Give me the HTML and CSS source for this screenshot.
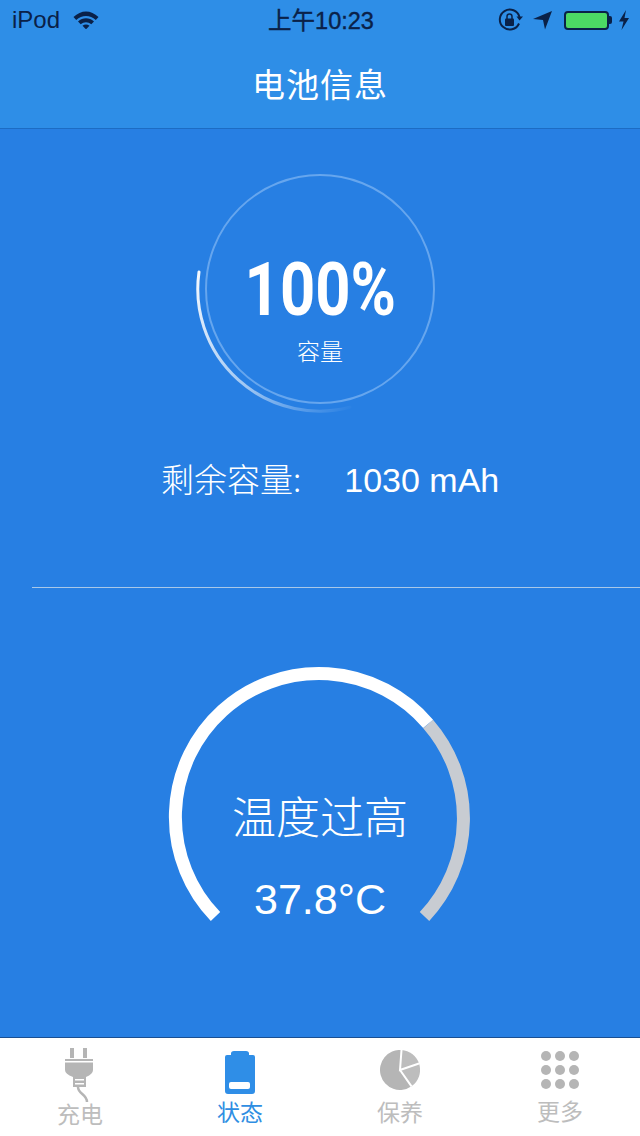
FILE: index.html
```html
<!DOCTYPE html>
<html lang="zh-CN">
  <head>
    <meta charset="UTF-8" />
    <meta name="viewport" content="width=device-width, initial-scale=1.0" />
    <title>电池信息</title>
    <link rel="stylesheet" href="styles.css">
  </head>
  <body>
    <div class="phone">
      <header class="topbar">
        <div class="status">
          <div class="status-left">
            <span>iPod</span>
            <svg class="wifi" width="26" height="18" viewBox="0 0 26 18">
              <path d="M0.500 6C8 -1.500 18 -1.500 25.500 6L22.800 9C17 3.500 9 3.500 3.200 9z" />
              <path d="M5 10.500C9.800 6.300 16.200 6.300 21 10.500L18.300 13.300C15.200 10.500 10.800 10.500 7.700 13.300z" />
              <path d="M9.500 14.800C11.600 13 14.400 13 16.500 14.800L13 18.300z" />
            </svg>
          </div>
          <div class="status-time">上午10:23</div>
          <div class="status-right">
            <svg width="26" height="24" viewBox="0 0 26 24">
              <path class="line" d="M21 15.500A10 10 0 1 1 21.500 9" />
              <path d="M18.500 8.500L25 8.500L21.500 12.500z" />
              <rect x="7" y="10.500" width="9" height="7.500" rx="1" />
              <path class="line-thin" d="M9 11V8.500a2.500 2.500 0 0 1 5 0V11" />
            </svg>
            <svg class="arrow" width="20" height="20" viewBox="0 0 20 20">
              <path d="M0 9L19 1L12 19.500L10 10z" />
            </svg>
            <div class="bat">
              <div class="bat-body"></div>
              <div class="bat-nub"></div>
            </div>
            <svg width="12" height="20" viewBox="0 0 12 20">
              <path d="M8 0L1 11.500H5.500L3.500 20L11 8H6.500z" />
            </svg>
          </div>
        </div>
        <h1 class="title">电池信息</h1>
      </header>

      <main class="main">
        <section class="capacity">
          <div class="stack ring">
            <svg width="250" height="250" viewBox="0 0 250 250">
              <defs>
                <linearGradient id="fade" gradientUnits="userSpaceOnUse" x1="4" y1="108" x2="158" y2="246">
                  <stop offset="0" stop-color="#fff" stop-opacity="0.95" />
                  <stop offset="0.55" stop-color="#fff" stop-opacity="0.55" />
                  <stop offset="1" stop-color="#fff" stop-opacity="0" />
                </linearGradient>
              </defs>
              <circle cx="125" cy="125" r="114" fill="none" stroke="#66a6ee" stroke-width="2" />
              <path d="M4 108A122 122 0 0 0 155 243.300" fill="none" stroke="url(#fade)" stroke-width="3" stroke-linecap="round" />
            </svg>
            <div class="ring-text">
              <div class="percent">100%</div>
              <div class="ring-label">容量</div>
            </div>
          </div>
          <div class="remain"><span class="remain-label">剩余容量:</span><span>1030 mAh</span></div>
        </section>

        <div class="divider"></div>

        <section class="temp">
          <div class="stack dial">
            <svg width="320" height="280" viewBox="0 0 320 280">
              <path d="M268.100 65.900A143.500 143.500 0 0 1 264.500 258.500" fill="none" stroke="#c8ccd2" stroke-width="13" />
              <path d="M55.500 258.500A143.500 143.500 0 1 1 268.100 65.900" fill="none" stroke="#fff" stroke-width="13" />
            </svg>
            <div class="dial-text">
              <div class="temp-state">温度过高</div>
              <div class="temp-value">37.8°C</div>
            </div>
          </div>
        </section>
      </main>

      <nav class="tabbar">
        <div class="tab tab-plug">
          <svg width="32" height="56" viewBox="0 0 32 56">
            <rect x="6" y="0" width="4" height="10" />
            <rect x="19" y="0" width="4" height="10" />
            <path d="M1 11H29V22Q29 26 22 29V39H9V29Q1 26 1 22z" />
            <rect x="1" y="13" width="28" height="1.500" fill="#fff" />
            <rect x="11" y="31" width="9" height="1.500" fill="#fff" />
            <rect x="11" y="35" width="9" height="1.500" fill="#fff" />
            <path d="M14 39C14 46 23 46 23 54" fill="none" stroke="#b5b5b5" stroke-width="2.500" />
          </svg>
          <span>充电</span>
        </div>
        <div class="tab tab-active">
          <svg width="30" height="43" viewBox="0 0 30 43">
            <path d="M6 4V2.500Q6 0 9 0H21Q24 0 24 2.500V4H28Q30 4 30 6V40Q30 43 27 43H3Q0 43 0 40V6Q0 4 2 4z" />
            <rect x="4" y="31" width="21" height="7" rx="2" fill="#fff" />
          </svg>
          <span>状态</span>
        </div>
        <div class="tab tab-pie">
          <svg width="40" height="40" viewBox="0 0 40 40">
            <path d="M20 20L31.500 36.300A20 20 0 1 1 21.500 0z" />
            <path class="pie-light" d="M20 20L21.500 0A20 20 0 0 1 39 13.500z" />
            <path class="pie-light" d="M20 20L39 13.500A20 20 0 0 1 31.500 36.300z" />
            <path class="pie-cuts" d="M21.500 0L20 20L39 13.500M20 20L31.500 36.300" />
          </svg>
          <span>保养</span>
        </div>
        <div class="tab">
          <div class="dots">
            <i></i><i></i><i></i>
            <i></i><i></i><i></i>
            <i></i><i></i><i></i>
          </div>
          <span>更多</span>
        </div>
      </nav>
    </div>
  </body>
</html>
```

FILE: styles.css
```css
body {
  margin: 0;
  font-family: "Liberation Sans", "Noto Sans CJK SC", sans-serif;
  background-color: #277fe3;
}
.phone {
  width: 640px;
  height: 1136px;
  display: flex;
  flex-direction: column;
  overflow: hidden;
}

.topbar {
  height: 128px;
  background-color: #2e8ee7;
  border-bottom: 1px solid #1c6cc4;
}
.status {
  height: 40px;
  display: grid;
  grid-template-columns: 1fr auto 1fr;
  align-items: center;
  padding: 0 10px 0 12px;
  color: #0a2148;
  font-size: 24px;
}
.status svg {
  fill: #0a2148;
  display: block;
}
.status-left {
  display: flex;
  align-items: center;
  gap: 13px;
}
.status-time {
  font-size: 23.5px;
  line-height: 24px;
  margin-top: 1px;
  -webkit-text-stroke: 0.4px #0a2148;
}
.status-right {
  display: flex;
  align-items: center;
  justify-content: flex-end;
}
.status .line {
  fill: none;
  stroke: #0a2148;
  stroke-width: 2;
}
.status .line-thin {
  fill: none;
  stroke: #0a2148;
  stroke-width: 1.5;
}
.arrow {
  margin-left: 9px;
}
.bat {
  display: flex;
  align-items: center;
  margin-left: 11px;
}
.bat-body {
  width: 41px;
  height: 15px;
  background-color: #4cd964;
  border: 2px solid #0a2148;
  border-radius: 4px;
}
.bat-nub {
  width: 3px;
  height: 8px;
  background-color: #0a2148;
  border-radius: 0 2px 2px 0;
}
.bat + svg {
  margin-left: 6px;
}
.title {
  margin: -1px 0 0;
  height: 88px;
  text-align: center;
  color: #fff;
  font-family: "Noto Sans CJK SC", sans-serif;
  font-size: 33px;
  font-weight: 400;
  letter-spacing: 1px;
  line-height: 88px;
}

.main {
  flex: 1;
  display: flex;
  flex-direction: column;
  background-color: #277fe3;
  color: #fff;
}
.stack {
  display: grid;
  justify-items: center;
}
.stack > * {
  grid-area: 1 / 1;
}
.capacity {
  height: 458px;
  padding-top: 35px;
  box-sizing: border-box;
}
.ring-text {
  display: flex;
  flex-direction: column;
  align-items: center;
}
.percent {
  margin-top: 80px;
  font-family: Roboto, sans-serif;
  font-size: 75px;
  font-weight: 700;
  line-height: 90px;
  transform: scaleX(0.82);
}
.ring-label {
  font-family: "Noto Sans CJK SC", sans-serif;
  font-size: 23px;
  font-weight: 300;
  line-height: 32px;
}
.remain {
  margin-top: 46px;
  padding-left: 161px;
  font-size: 34px;
  line-height: 40px;
  display: flex;
  gap: 43px;
}
.remain-label {
  margin-top: -2px;
  font-family: "Noto Sans CJK SC", sans-serif;
  font-weight: 300;
  font-size: 33px;
}

.divider {
  height: 1px;
  margin-left: 32px;
  background-color: #a9c8e8;
}
.temp {
  padding-top: 70px;
}
.dial-text {
  display: flex;
  flex-direction: column;
  align-items: center;
}
.temp-state {
  margin-top: 127px;
  font-family: "Noto Sans CJK SC", sans-serif;
  font-weight: 300;
  font-size: 44px;
  line-height: 60px;
}
.temp-value {
  margin-top: 24px;
  font-size: 43px;
  line-height: 60px;
}

.tabbar {
  height: 98px;
  border-top: 1px solid #1a4f92;
  background-color: #fff;
  display: grid;
  grid-template-columns: repeat(4, 1fr);
}
.tab {
  display: flex;
  flex-direction: column;
  align-items: center;
  padding-top: 13px;
  color: #bdbdbd;
  font-family: "Noto Sans CJK SC", sans-serif;
  font-size: 23px;
  line-height: 30px;
}
.tab svg {
  display: block;
  fill: #b5b5b5;
  margin-bottom: 4px;
}
.tab .pie-light {
  fill: #bdbdbd;
}
.tab .pie-cuts {
  fill: none;
  stroke: #fff;
  stroke-width: 2;
}
.tab-plug {
  padding-top: 10px;
}
.tab-plug svg {
  margin-bottom: -6px;
}
.tab-active {
  color: #2f8ee2;
}
.tab-active svg {
  fill: #2f8ee7;
  margin-bottom: 2px;
}
.tab-pie {
  padding-top: 12px;
}
.tab-pie svg {
  margin-bottom: 6px;
}
.dots {
  width: 38px;
  height: 38px;
  margin-bottom: 6px;
  display: grid;
  grid-template-columns: repeat(3, 10px);
  grid-auto-rows: 10px;
  justify-content: space-between;
  align-content: space-between;
}
.dots i {
  background-color: #b5b5b5;
  border-radius: 50%;
}
```
